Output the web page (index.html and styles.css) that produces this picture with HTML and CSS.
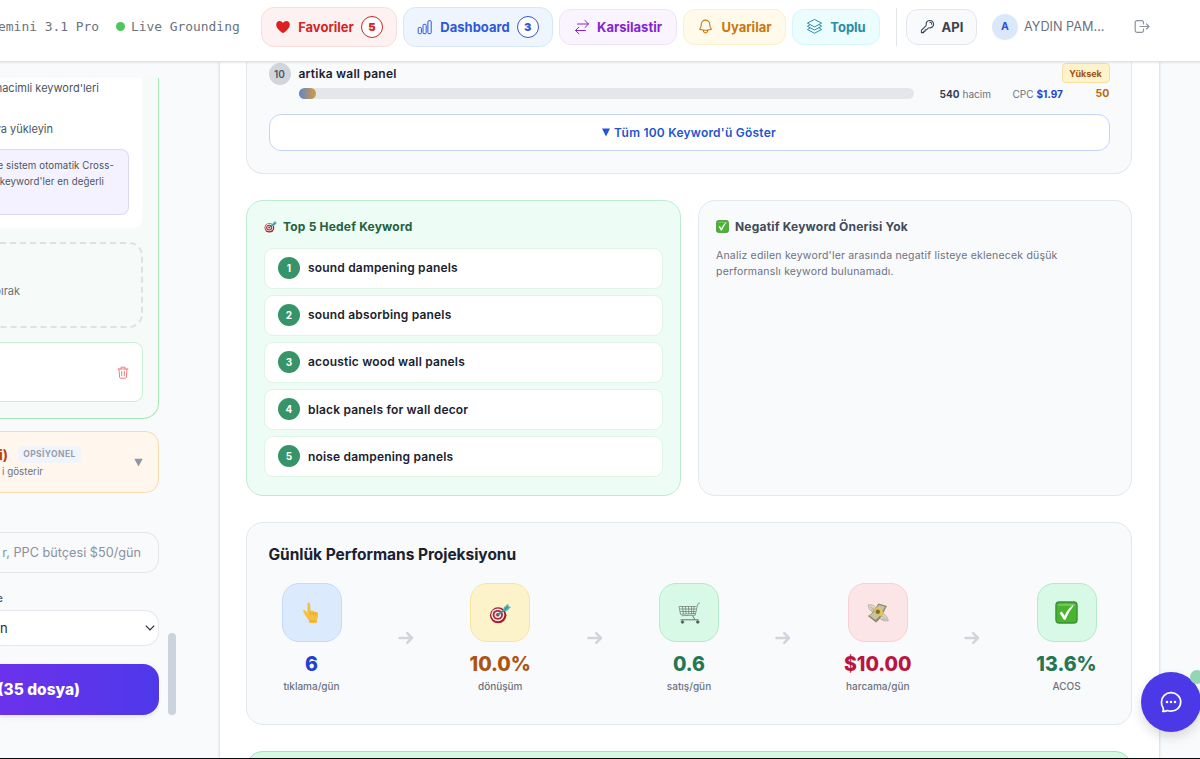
FILE: index.html
```html
<!DOCTYPE html>
<html lang="tr">
<head>
<meta charset="utf-8">
<title>Dashboard</title>
<link rel="stylesheet" href="styles.css">
</head>
<body>
<svg class="defs" width="0" height="0">
  <defs>
    <symbol id="target" viewBox="0 0 24 24">
      <ellipse cx="10" cy="14.500" rx="9" ry="8.700" fill="#a51d2b"/>
      <ellipse cx="9.6" cy="14" rx="7.2" ry="6.900" fill="#f3e9e8"/>
      <ellipse cx="9.6" cy="14" rx="5.6" ry="5.400" fill="#b02835"/>
      <ellipse cx="9.6" cy="14" rx="3.6" ry="3.500" fill="#f3e9e8"/>
      <circle cx="9.6" cy="14" r="1.9" fill="#b02835"/>
      <path d="M9.6 14 18 7.500" stroke="#3f8f93" stroke-width="1.900"/>
      <path d="M15.500 9.500 16 6 21 1.500l.2 3.300 3 .4-5 4.800z" fill="#55b2b6"/>
      <path d="m17 8.500 4-3.600" stroke="#2f6e78" stroke-width="1"/>
    </symbol>
    <symbol id="check" viewBox="0 0 24 24">
      <rect x="1" y="1" width="22" height="22" rx="3.500" fill="#49b52e" stroke="#3c8f35" stroke-width="1.400"/>
      <path d="M3 3.500Q12 2 21 3.500V5H3z" fill="#8bd46f" opacity=".7"/>
      <path d="M4.800 12.500 7.200 11l2.800 4.500C12.500 10 15 7 18.500 4.500l.8.7C15.700 9.500 13.200 14 11 19.500H9.200z" fill="#fff"/>
    </symbol>
    <symbol id="arrow" viewBox="0 0 16 14">
      <path d="M1.500 7h12.500M9.200 2.200 14 7l-4.800 4.800" fill="none" stroke="#d1d5db" stroke-width="2.500" stroke-linecap="round" stroke-linejoin="round"/>
    </symbol>
  </defs>
</svg>
<div class="app">
  <header class="topbar">
    <div class="status">
      <span class="model">emini 3.1 Pro</span>
      <span class="dot"></span>
      <span>Live Grounding</span>
    </div>
    <nav class="nav">
      <a class="btn tall red"><svg width="16" height="16" viewBox="0 0 16 16"><path d="M8 14.300C3.800 11.300 1.200 8.800 1.200 5.700 1.200 3.500 2.700 2 4.600 2 6 2 7.300 2.700 8 4c.7-1.300 2-2 3.400-2 1.900 0 3.400 1.500 3.400 3.700 0 3.100-2.600 5.600-6.800 8.600z" fill="#dc2020"/></svg><span>Favoriler</span><b class="count">5</b></a>
      <a class="btn tall blue"><svg width="16" height="16" viewBox="0 0 16 16" fill="none" stroke="currentColor"><rect x="1.200" y="8.500" width="3.200" height="6.200" rx="1"/><rect x="6" y="5.300" width="3.200" height="9.400" rx="1"/><rect x="10.900" y="1.700" width="3.300" height="13" rx="1"/></svg><span>Dashboard</span><b class="count">3</b></a>
      <a class="btn purple"><svg width="16" height="16" viewBox="0 0 16 16" fill="none" stroke="currentColor" stroke-linecap="round" stroke-linejoin="round"><path d="M3.500 5h11M11 1.500 14.500 5 11 8.500M11.500 11.500H1.500M4.800 8.200 1.500 11.500l3.300 3.300"/></svg><span>Karsilastir</span></a>
      <a class="btn amber"><svg width="17" height="17" viewBox="0 0 24 24" fill="none" stroke="currentColor" stroke-width="1.500" stroke-linecap="round" stroke-linejoin="round"><path d="M14.857 17.082a23.848 23.848 0 0 0 5.454-1.310A8.967 8.967 0 0 1 18 9.750V9A6 6 0 0 0 6 9v.75a8.967 8.967 0 0 1-2.312 6.022c1.733.64 3.560 1.085 5.455 1.310m5.714 0a24.255 24.255 0 0 1-5.714 0m5.714 0a3 3 0 1 1-5.714 0"/></svg><span>Uyarilar</span></a>
      <a class="btn cyan"><svg width="17" height="17" viewBox="0 0 24 24" fill="none" stroke="currentColor" stroke-width="1.400" stroke-linejoin="round"><path d="M12 2 22 7.300 12 12.600 2 7.300zM5.800 9.500 2 11.700 12 17l10-5.300-3.800-2.200M5.800 14 2 16.200l10 5.300 10-5.300-3.800-2.200"/></svg><span>Toplu</span></a>
    </nav>
    <span class="rule"></span>
    <a class="btn api"><svg width="15" height="15" viewBox="0 0 24 24" fill="none" stroke="currentColor" stroke-width="1.700" stroke-linecap="round" stroke-linejoin="round"><path d="M15.750 5.250a3 3 0 0 1 3 3m3 0a6 6 0 0 1-7.029 5.912c-.563-.097-1.159.026-1.563.43L10.500 17.250H8.250v2.250H6v2.250H2.250v-2.818c0-.597.237-1.170.659-1.591l6.499-6.499c.404-.404.527-1 .43-1.563A6 6 0 1 1 21.750 8.250Z"/></svg><span>API</span></a>
    <span class="avatar">A</span>
    <span class="user">AYDIN PAM...</span>
    <svg class="logout" width="16" height="16" viewBox="0 0 16 16" fill="none" stroke="#8b93a1" stroke-width="1.200" stroke-linecap="round" stroke-linejoin="round"><path d="M9.500 5V3.500a1.800 1.800 0 0 0-1.800-1.800H3A1.800 1.800 0 0 0 1.200 3.500v8A1.800 1.800 0 0 0 3 13.300h4.700a1.800 1.800 0 0 0 1.800-1.800V10M6 7.500h9M12.500 5 15 7.500 12.500 10"/></svg>
  </header>

  <div class="body">
    <aside class="side">
      <section class="upload">
        <div class="guide">
          <p class="g1">hacimli keyword'leri</p>
          <p class="g2">ya yükleyin</p>
          <div class="tip"><p class="t1">e sistem otomatik Cross-</p><p class="t2">keyword'ler en değerli</p></div>
        </div>
        <div class="drop"><span>bırak</span></div>
        <div class="file"><svg width="12" height="13" viewBox="0 0 12 13" fill="none" stroke="#ee7f7f" stroke-linecap="round"><path d="M1 3h10M4 3V1.200h4V3M2 3l.6 8.300a1 1 0 0 0 1 .9h4.800a1 1 0 0 0 1-.9L10 3M4.700 5.300v4.500M7.300 5.300v4.500"/></svg></div>
      </section>
      <section class="optional">
        <div class="opt-copy">
          <div class="opt-row"><strong>i)</strong><span class="pill">OPSİYONEL</span></div>
          <p>i gösterir</p>
        </div>
        <svg width="9" height="9" viewBox="0 0 9 9"><path d="M.3.800h8.400L4.500 8.500z" fill="#8f96a8"/></svg>
      </section>
      <div class="input"><span>r, PPC bütçesi $50/gün</span></div>
      <div class="label"><span>e</span></div>
      <div class="select"><span>n</span><svg width="10" height="6" viewBox="0 0 10 6"><path d="M.8.700 5 4.900 9.200.7" fill="none" stroke="#222936" stroke-width="1.200"/></svg></div>
      <div class="submit"><span>(35 dosya)</span></div>
    </aside>
    <div class="scroll"><i></i></div>

    <main class="main">
      <section class="card keywords">
        <div class="kw">
          <span class="rank">10</span>
          <div class="kw-body">
            <div class="kw-top"><strong>artika wall panel</strong><span class="high">Yüksek</span></div>
            <div class="kw-stats">
              <div class="track"><div class="fill"></div></div>
              <span class="vol"><b>540</b> hacim</span>
              <span class="cpc">CPC <b>$1.97</b></span>
              <b class="score">50</b>
            </div>
          </div>
        </div>
        <div class="show-all"><svg width="8" height="9" viewBox="0 0 8 9"><path d="M0 .5h8L4 8.500z" fill="#2454dc"/></svg><span>Tüm 100 Keyword'ü Göster</span></div>
      </section>

      <div class="pair">
        <section class="card top5">
          <h3><svg width="13" height="13"><use href="#target"/></svg><span>Top 5 Hedef Keyword</span></h3>
          <ol>
            <li><i>1</i><span>sound dampening panels</span></li>
            <li><i>2</i><span>sound absorbing panels</span></li>
            <li><i>3</i><span>acoustic wood wall panels</span></li>
            <li><i>4</i><span>black panels for wall decor</span></li>
            <li><i>5</i><span>noise dampening panels</span></li>
          </ol>
        </section>
        <section class="card negative">
          <h3><svg width="13" height="13"><use href="#check"/></svg><span>Negatif Keyword Önerisi Yok</span></h3>
          <p>Analiz edilen keyword'ler arasında negatif listeye eklenecek düşük<br>performanslı keyword bulunamadı.</p>
        </section>
      </div>

      <section class="card projection">
        <h2>Günlük Performans Projeksiyonu</h2>
        <div class="flow">
          <div class="step s-blue"><div class="tile"><svg width="22" height="22" viewBox="0 0 22 22"><path d="M6.500 1.800c0-1.500 2.500-1.500 2.600 0l.5 7.300c1-.8 2.300-.6 2.700.3 1-.5 2.200-.2 2.500.7 1.300-.3 2.300.4 2.300 1.700 0 3-.3 4.500-1.300 6.200v3H8.200v-2.500C6.500 17 4 13.500 2.200 9.300c-.4-1.200 1-1.900 1.900-.9L6.300 11z" fill="#f6bf3d"/><path d="M9.500 9.500v3.300M12.300 10v3M14.800 10.500v2.800M8.200 19h7.500" stroke="#d89a30" stroke-width=".7" fill="none"/></svg></div><strong>6</strong><small>tıklama/gün</small></div>
          <svg class="arr" width="16" height="14"><use href="#arrow"/></svg>
          <div class="step s-amber"><div class="tile"><svg width="22" height="22"><use href="#target"/></svg></div><strong>10.0%</strong><small>dönüşüm</small></div>
          <svg class="arr" width="16" height="14"><use href="#arrow"/></svg>
          <div class="step s-green"><div class="tile"><svg width="23" height="22" viewBox="0 0 23 22" fill="none" stroke="#69766d"><path d="M22 .8 19.800 2l-2.600 11.200-13.700.5M1 4.500l1.500 7.800 15-.8M1 4.500h17.500M1.700 7h16.700M2.200 9.500h15.500M4.500 4.500l1 7.500M7.500 4.500l.6 7.500M10.500 4.500l.3 7.500M13.500 4.500v7.500M16 4.500l-.4 7.500" stroke-width=".7"/><path d="m14.500 13.500 2.500 4.300H2.500M17 17.800h3.500" stroke-width="1"/><circle cx="4.500" cy="20" r="1.300" fill="#48514b"/><circle cx="19.800" cy="20" r="1.300" fill="#48514b"/></svg></div><strong>0.6</strong><small>satış/gün</small></div>
          <svg class="arr" width="16" height="14"><use href="#arrow"/></svg>
          <div class="step s-red"><div class="tile"><svg width="22" height="22" viewBox="0 0 22 22"><path d="M1 3c3-1 6 0 8 3l-3 4C3 9 1.500 6.500 1 3zM13 12c4-1 7 1 8.300 7-4 .5-7-.8-9-3z" fill="#d8d5c9" stroke="#aaa798" stroke-width=".7"/><path d="m3 5 4 2M4 8l3-.5M15 14l5 4M15 17l3 1" stroke="#aaa798" stroke-width=".7"/><path d="M.8 14C6 12 8.500 5 11.500 1.500L20 4c-3 5-5 12-11 16.500z" fill="#8c8b6a"/><path d="M2.500 13.500C7 11.500 9.500 5.500 12 3l6 1.700C15.500 9 13.500 14 8.500 18z" fill="#c8c49c"/><path d="m6.500 9 3-4 7.200 5.500-2.500 4.200z" fill="#e6c44d"/><circle cx="10.800" cy="9.700" r="2.200" fill="#85702a"/></svg></div><strong>$10.00</strong><small>harcama/gün</small></div>
          <svg class="arr" width="16" height="14"><use href="#arrow"/></svg>
          <div class="step s-green"><div class="tile"><svg width="23" height="23"><use href="#check"/></svg></div><strong>13.6%</strong><small>ACOS</small></div>
        </div>
      </section>

      <section class="card next"></section>
    </main>
  </div>

  <div class="chat"><svg width="24" height="24" viewBox="0 0 24 24" fill="none" stroke="#fff" stroke-width="1.700" stroke-linecap="round" stroke-linejoin="round"><path d="M3.800 21.300c.8-1 .9-2.200.3-3.300A9.300 9.300 0 0 1 2.500 12C2.500 6.700 6.700 2.700 12 2.700s9.700 4 9.700 9.300-4.400 9.200-9.700 9.200c-1.300 0-2.500-.2-3.600-.7-1.300.8-2.900 1.100-4.600.8z"/><path d="M8 12h.01M12 12h.01M16 12h.01" stroke-width="2.600"/></svg></div>
  <span class="online"></span>
  <div class="edge"></div>
</div>
</body>
</html>
```
FILE: styles.css
```css
* { box-sizing: border-box; margin: 0; padding: 0; }
body { font-family: Inter, "Liberation Sans", sans-serif; background: #f8fafc; }
.defs { position: absolute; }
svg { display: block; flex: none; }
.app { position: relative; width: 1200px; height: 759px; overflow: hidden; display: flex; flex-direction: column; background: #f8fafc; }

/* Top bar */
.topbar { position: relative; z-index: 2; flex: none; height: 62px; padding-bottom: 8px; display: flex; align-items: center; background: #fff; border-bottom: 1px solid #e2e4e8; box-shadow: 0 1px 2px rgba(0,0,0,.09); }
.status { width: 261px; display: flex; align-items: center; font: 12.9px "DejaVu Sans Mono", monospace; color: #6b7280; white-space: nowrap; }
.model { width: 99px; display: flex; justify-content: flex-end; }
.dot { width: 9px; height: 9px; margin: 0 6px 0 17px; border-radius: 50%; background: #4fc65b; }
.nav { display: flex; align-items: center; gap: 6px; }
.btn { height: 36px; display: flex; align-items: center; justify-content: center; gap: 7px; border: 1px solid; border-radius: 12px; font-size: 13px; font-weight: 700; white-space: nowrap; }
.tall { height: 40px; border-radius: 13px; }
.count { width: 22px; height: 22px; border: 1px solid currentColor; border-radius: 50%; background: #fff; display: grid; place-items: center; font-size: 11px; }
.red { width: 136px; color: #d32626; background: #fdf1f1; border-color: #fadddd; }
.blue { width: 150px; color: #2f58d8; background: #eef5fe; border-color: #d6e7fb; }
.purple { width: 118px; color: #8524d0; background: #faf4fe; border-color: #efe1fb; }
.amber { width: 103px; color: #c97710; background: #fffaea; border-color: #fbf0c8; }
.cyan { width: 88px; color: #2b8ca8; background: #ecfdff; border-color: #d3f7fb; }
.rule { width: 1px; height: 38px; margin: 0 9px 0 16px; background: #e2e5ea; }
.api { width: 71px; color: #374151; background: #f8fafc; border-color: #e3e6ec; }
.avatar { width: 26px; height: 26px; margin: 0 6px 0 15px; border-radius: 50%; background: #dbe8fc; color: #2a50df; font-size: 10.500px; font-weight: 700; display: grid; place-items: center; }
.user { width: 110px; font-size: 12.700px; color: #6b7280; }

/* Body */
.body { flex: 1; min-height: 0; display: flex; }
.side { width: 159px; flex: none; padding-top: 16px; display: flex; flex-direction: column; white-space: nowrap; overflow: hidden; }
.side > * { flex: none; border-left: 0 !important; }
.upload { height: 341px; padding-right: 15px; background: #f6faf8; border: 1px solid #a6e8b6; border-top: 0; border-radius: 0 0 16px 0; }
.upload p, .drop, .input, .label { display: flex; justify-content: flex-end; }
.guide { height: 151px; background: #fff; border: 1px solid #fafbfb; border-width: 0 1px 1px 0; border-radius: 0 0 10px 0; font-size: 11px; color: #4b5563; padding-right: 13px; }
.g1 { padding: 3px 30px 0 0; height: 17px; line-height: 14px; }
.g2 { padding: 27px 76px 0 0; height: 54px; line-height: 14px; }
.tip { height: 66px; background: #f4f2fe; border: 1px solid #dcd7fa; border-left: 0; border-radius: 0 8px 8px 0; padding: 8px 14px 0 0; line-height: 16px; font-size: 9.700px; letter-spacing: .1px; }
.t2 { padding-right: 10px; }
.drop { height: 86px; margin-top: 13px; border: 2px dashed #dde2e4; border-left: 0; border-radius: 0 14px 14px 0; align-items: center; font-size: 11px; color: #6b7280; padding: 11px 121px 0 0; }
.file { height: 60px; margin-top: 14px; background: #fff; border: 1px solid #c9f0d4; border-left: 0; border-radius: 0 9px 9px 0; display: flex; align-items: center; justify-content: flex-end; padding-right: 13px; }
.optional { height: 62px; margin-top: 12px; background: #fff7ee; border: 1px solid #f8dcb4; border-radius: 0 14px 14px 0; display: flex; align-items: center; justify-content: space-between; padding-right: 15px; }
.opt-row { display: flex; align-items: center; gap: 10px; padding-top: 1px; }
.opt-row strong { width: 8px; display: flex; justify-content: flex-end; font-size: 14px; line-height: 17px; color: #b5400f; }
.pill { height: 17px; width: 63px; display: grid; place-items: center; background: #f1f4f8; border-radius: 5px; font-size: 8.500px; font-weight: 700; letter-spacing: .4px; color: #94a0b2; }
.optional p { margin-top: 1px; width: 43px; display: flex; justify-content: flex-end; font-size: 9.800px; line-height: 16px; color: #6b7280; }
.input { height: 41px; margin-top: 39px; align-items: center; border: 1px solid #e3e6eb; border-radius: 0 14px 14px 0; padding-right: 17px; font-size: 12.700px; color: #8b919d; }
.label { width: 3px; height: 37px; align-items: center; padding-top: 13px; font-size: 10.500px; font-weight: 500; color: #4b5563; }
.select { height: 36px; background: #fff; border: 1px solid #e5e7eb; border-radius: 0 14px 14px 0; display: flex; align-items: center; justify-content: space-between; padding-right: 3px; font-size: 13px; color: #1f2937; }
.submit { height: 51px; margin-top: 18px; border-radius: 0 16px 16px 0; background: linear-gradient(90deg, #6b32ea, #4f38ea); box-shadow: 0 2px 5px rgba(80,70,160,.12); display: flex; align-items: center; justify-content: flex-end; padding-right: 79px; font-size: 15.500px; font-weight: 800; color: #fff; }
.scroll { width: 61px; flex: none; padding: 571px 0 0 9px; }
.scroll i { display: block; width: 8px; height: 82px; border-radius: 4px; background: #cbd3df; }

/* Main panel */
.main { width: 939px; flex: none; padding: 0 27px 0 26px; background: #fff; box-shadow: 0 0 3px rgba(0,0,0,.22); display: flex; flex-direction: column; overflow: hidden; }
.card { flex: none; border: 1px solid #e4e7ec; border-radius: 17px; background: #f9fafc; }
.keywords { height: 112px; padding: 0 21.500px; border-top: 0; border-radius: 0 0 17px 17px; }
.kw { display: flex; gap: 8px; padding-top: 1px; }
.rank { width: 22px; height: 22px; border-radius: 50%; background: #d1d5db; display: grid; place-items: center; font-size: 10px; font-weight: 600; color: #4b5563; }
.kw-body { flex: 1; }
.kw-top { height: 20px; display: flex; align-items: center; justify-content: space-between; font-size: 12px; color: #1a2230; }
.kw-top strong { font-weight: 600; letter-spacing: .22px; }
.high { width: 48px; height: 20px; display: grid; place-items: center; border: 1px solid #f6e0a0; border-radius: 4px; background: #fef3cd; color: #a34f12; font-size: 9px; font-weight: 700; }
.kw-stats { display: flex; align-items: center; height: 21px; font-size: 10px; color: #6b7280; letter-spacing: .05px; }
.track { width: 615px; height: 11px; margin-right: 26px; border-radius: 6px; background: #e5e6ea; }
.fill { width: 17px; height: 11px; border-radius: 6px; background: linear-gradient(90deg, #6383d0, #d39a3c); }
.vol { width: 73px; } .vol b { color: #374151; }
.cpc b { color: #2342ce; }
.score { margin-left: auto; color: #bd6b10; font-size: 10.500px; }
.show-all { height: 37px; margin-top: 10px; background: #fff; border: 1px solid #c5d5f5; border-radius: 12px; display: flex; align-items: center; justify-content: center; gap: 4px; color: #2454cf; font-size: 12px; font-weight: 600; letter-spacing: .22px; }
.pair { flex: none; height: 296px; margin-top: 25.500px; display: grid; grid-template-columns: 435px 434px; gap: 17px; }
.pair h3 { display: flex; align-items: center; gap: 6px; height: 20px; font-size: 12px; letter-spacing: .2px; font-weight: 700; }
.top5, .negative { padding: 15.500px 17px; }
.top5 { background: #edfcf4; border-color: #bdecd2; }
.top5 h3 { color: #24623f; }
.top5 ol { list-style: none; margin-top: 11.500px; display: grid; gap: 6.200px; }
.top5 li { height: 41px; background: #fff; border: 1px solid #dff5e8; border-radius: 9px; display: flex; align-items: center; gap: 8px; padding: 0 0 1px 13px; font-size: 12px; font-weight: 600; letter-spacing: .18px; color: #1a2230; }
.top5 li i { width: 22px; height: 22px; border-radius: 50%; background: #369468; color: #fff; display: grid; place-items: center; font-size: 10px; font-style: normal; font-weight: 700; }
.negative h3 { color: #414b59; }
.negative p { margin-top: 12px; font-size: 10.500px; line-height: 16px; letter-spacing: .2px; color: #6b7280; }
.projection { height: 203px; margin-top: 26.500px; padding: 19px 21.500px 0; }
.projection h2 { height: 25px; line-height: 25px; font-size: 15.500px; letter-spacing: -.04px; font-weight: 700; color: #1a2230; }
.flow { margin-top: 16px; display: flex; align-items: center; justify-content: space-between; }
.arr { margin-bottom: 2px; }
.step { width: 86px; height: 111px; display: flex; flex-direction: column; align-items: center; }
.tile { width: 60px; height: 60px; border: 1px solid; border-radius: 17px; display: grid; place-items: center; }
.step strong { height: 24px; line-height: 24px; margin-top: 10px; font-size: 19.500px; font-weight: 800; }
.step small { height: 16px; line-height: 16px; margin-top: 2px; font-size: 10px; font-weight: 500; color: #6b7280; }
.s-blue strong { color: #2340cf; } .s-blue .tile { background: #dceafd; border-color: #c6dbf9; }
.s-amber strong { color: #ac5512; } .s-amber .tile { background: #fdf3cb; border-color: #f8e59c; }
.s-green strong { color: #267652; } .s-green .tile { background: #d9f9e7; border-color: #b5eacb; }
.s-red strong { color: #b91540; } .s-red .tile { background: #fce5e7; border-color: #f9d0d3; }
.next { height: 40px; margin-top: 26px; background: #d2fae1; border-color: #a9dfc2; }

/* Overlays */
.chat { position: absolute; z-index: 3; left: 1141px; top: 672px; width: 60px; height: 60px; border-radius: 50%; background: #4b39e8; box-shadow: 0 5px 12px rgba(0,0,0,.14); display: grid; place-items: center; }
.online { position: absolute; z-index: 4; left: 1190px; top: 670px; width: 14px; height: 14px; border-radius: 50%; background: #95d6b2; }
.edge { position: absolute; z-index: 5; left: 0; right: 0; bottom: 0; height: 1px; background: #080a0d; }
```
